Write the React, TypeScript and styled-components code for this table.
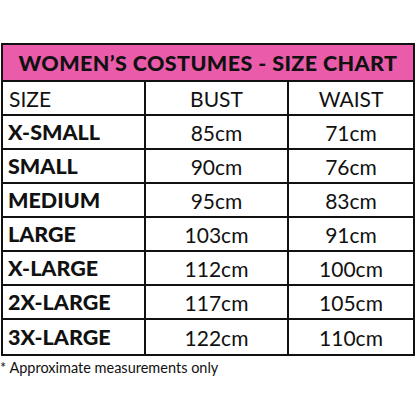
import styled, { createGlobalStyle } from "styled-components";

const rows: [string, string, string][] = [
  ["X-SMALL", "85cm", "71cm"],
  ["SMALL", "90cm", "76cm"],
  ["MEDIUM", "95cm", "83cm"],
  ["LARGE", "103cm", "91cm"],
  ["X-LARGE", "112cm", "100cm"],
  ["2X-LARGE", "117cm", "105cm"],
  ["3X-LARGE", "122cm", "110cm"],
];

export default function App() {
  return (
    <>
      <GlobalStyle />
      <Page>
        <Chart>
          <Title>WOMEN’S COSTUMES - SIZE CHART</Title>
          <Row>
            <SizeCell>SIZE</SizeCell>
            <ValueCell>BUST</ValueCell>
            <ValueCell $last>WAIST</ValueCell>
          </Row>
          {rows.map(([size, bust, waist], i) => (
            <Row key={size} $short={i === rows.length - 1}>
              <SizeCell $bold>{size}</SizeCell>
              <ValueCell>{bust}</ValueCell>
              <ValueCell $last>{waist}</ValueCell>
            </Row>
          ))}
        </Chart>
        <Note>* Approximate measurements only</Note>
      </Page>
    </>
  );
}

const GlobalStyle = createGlobalStyle`
  html, body {
    margin: 0;
    background: #fff;
  }
  body {
    font-family: Lato, "Liberation Sans", sans-serif;
    color: #111;
  }
`;

const Page = styled.main`
  width: 416px;
  height: 416px;
  padding-top: 43px;
  box-sizing: border-box;
`;

const Chart = styled.section`
  margin-left: 1px;
  width: 414px;
  border: 2px solid #111;
  box-sizing: border-box;
`;

const Title = styled.h1`
  margin: 0;
  height: 35px;
  display: flex;
  align-items: center;
  justify-content: center;
  background: #ea5ca9;
  border-bottom: 2px solid #111;
  font-size: 21.5px;
  font-weight: 900;
  letter-spacing: 0.4px;
`;

const Row = styled.div<{ $short?: boolean }>`
  display: grid;
  grid-template-columns: 143px 143px 1fr;
  height: 34px;
  border-bottom: ${(p) => (p.$short ? "none" : "2px solid #111")};
  box-sizing: border-box;
`;

const SizeCell = styled.div<{ $bold?: boolean }>`
  display: flex;
  align-items: center;
  padding-left: ${(p) => (p.$bold ? "5px" : "6px")};
  border-right: 2px solid #111;
  font-size: ${(p) => (p.$bold ? "21.5px" : "21px")};
  font-weight: ${(p) => (p.$bold ? 900 : 400)};
`;

const ValueCell = styled.div<{ $last?: boolean }>`
  display: flex;
  align-items: center;
  justify-content: center;
  border-right: ${(p) => (p.$last ? "none" : "2px solid #111")};
  font-size: 21px;
`;

const Note = styled.p`
  margin: 3px 0 0 0;
  font-size: 14.5px;
`;
